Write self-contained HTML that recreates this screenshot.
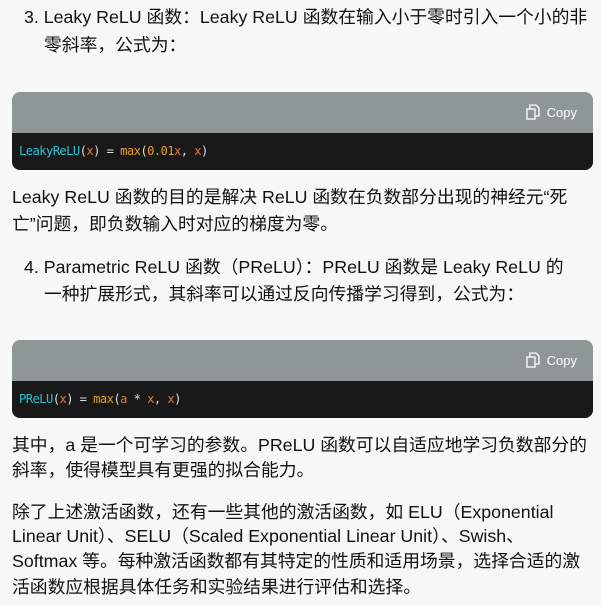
<!DOCTYPE html>
<html><head><meta charset="utf-8"><style>
body{margin:0;width:601px;height:605px;background:#f7f7f7;overflow:hidden;font-family:"Liberation Sans","Noto Sans CJK SC",sans-serif;font-size:17.8px;color:#111;position:relative}
.l{position:absolute;white-space:nowrap;line-height:20px}
.cb{position:absolute;left:12px;width:581px;border-radius:8px;overflow:hidden}
.hd{height:41px;background:#8e9696;position:relative}
.cp{position:absolute;right:16px;top:12px;color:#fff;font-size:13px;display:flex;align-items:center;gap:6px}
.bd{height:37px;background:#191919;font-family:"DejaVu Sans Mono",monospace;font-size:12.2px;letter-spacing:-0.6px;line-height:37px;padding-left:7px;color:#ddd}
.c{color:#2bc0d6}.o{color:#e07a3a}.y{color:#e5a028}
</style></head><body>
<div class="l" style="left:24px;top:7px">3. Leaky ReLU 函数：Leaky ReLU 函数在输入小于零时引入一个小的非</div>
<div class="l" style="left:44px;top:35px">零斜率，公式为：</div>
<div class="cb" style="top:92px"><div class="hd"><div class="cp"><svg width="16" height="16" viewBox="0 0 16 16" fill="none" stroke="#fff" stroke-width="1.3"><rect x="2" y="5" width="8" height="10"/><path d="M5 5V1h6l3 3v8h-4"/></svg>Copy</div></div>
<div class="bd"><span class="c">LeakyReLU</span>(<span class="o">x</span>) = <span class="y">max</span>(<span class="y">0.01</span><span class="o">x</span>, <span class="o">x</span>)</div></div>
<div class="l" style="left:12px;top:187px">Leaky ReLU 函数的目的是解决 ReLU 函数在负数部分出现的神经元“死</div>
<div class="l" style="left:12px;top:214px">亡”问题，即负数输入时对应的梯度为零。</div>
<div class="l" style="left:24px;top:257px">4. Parametric ReLU 函数（PReLU）：PReLU 函数是 Leaky ReLU 的</div>
<div class="l" style="left:44px;top:284px">一种扩展形式，其斜率可以通过反向传播学习得到，公式为：</div>
<div class="cb" style="top:340px"><div class="hd"><div class="cp"><svg width="16" height="16" viewBox="0 0 16 16" fill="none" stroke="#fff" stroke-width="1.3"><rect x="2" y="5" width="8" height="10"/><path d="M5 5V1h6l3 3v8h-4"/></svg>Copy</div></div>
<div class="bd"><span class="c">PReLU</span>(<span class="o">x</span>) = <span class="y">max</span>(<span class="o">a</span> * <span class="o">x</span>, <span class="o">x</span>)</div></div>
<div class="l" style="left:12px;top:435px">其中，a 是一个可学习的参数。PReLU 函数可以自适应地学习负数部分的</div>
<div class="l" style="left:12px;top:460px">斜率，使得模型具有更强的拟合能力。</div>
<div class="l" style="left:12px;top:502px">除了上述激活函数，还有一些其他的激活函数，如 ELU（Exponential</div>
<div class="l" style="left:12px;top:526px">Linear Unit）、SELU（Scaled Exponential Linear Unit）、Swish、</div>
<div class="l" style="left:12px;top:551px">Softmax 等。每种激活函数都有其特定的性质和适用场景，选择合适的激</div>
<div class="l" style="left:12px;top:577px">活函数应根据具体任务和实验结果进行评估和选择。</div>
</body></html>
